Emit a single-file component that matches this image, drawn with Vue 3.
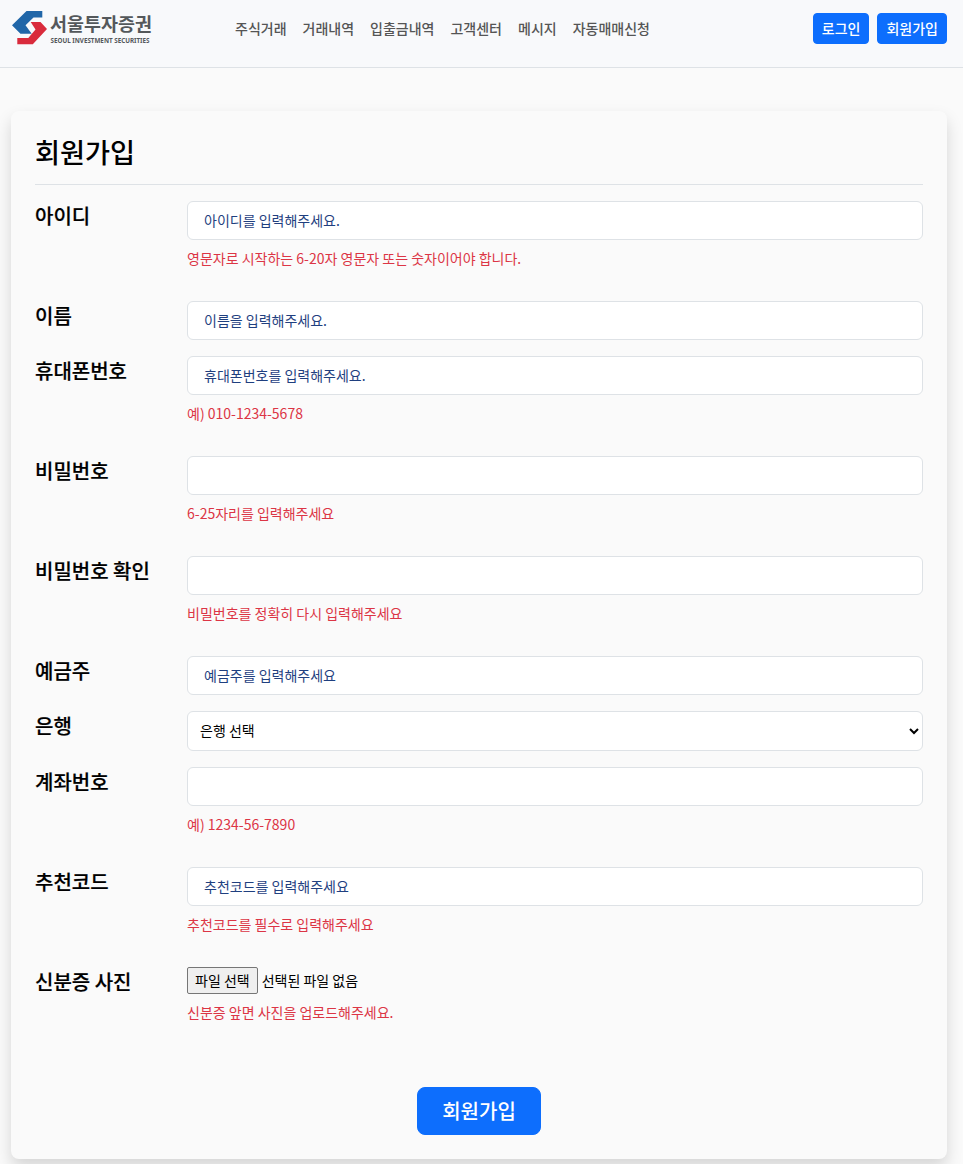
<script setup>
import { reactive } from 'vue';

const menus = ['주식거래', '거래내역', '입출금내역', '고객센터', '메시지', '자동매매신청'];

const fields = [
  { id: 'userid', label: '아이디', type: 'text', placeholder: '아이디를 입력해주세요.', help: '영문자로 시작하는 6-20자 영문자 또는 숫자이어야 합니다.' },
  { id: 'name', label: '이름', type: 'text', placeholder: '이름을 입력해주세요.' },
  { id: 'phone', label: '휴대폰번호', type: 'text', placeholder: '휴대폰번호를 입력해주세요.', help: '예) 010-1234-5678' },
  { id: 'password', label: '비밀번호', type: 'password', help: '6-25자리를 입력해주세요' },
  { id: 'passwordConfirm', label: '비밀번호 확인', type: 'password', help: '비밀번호를 정확히 다시 입력해주세요' },
  { id: 'holder', label: '예금주', type: 'text', placeholder: '예금주를 입력해주세요' },
  { id: 'bank', label: '은행', type: 'select' },
  { id: 'account', label: '계좌번호', type: 'text', help: '예) 1234-56-7890' },
  { id: 'code', label: '추천코드', type: 'text', placeholder: '추천코드를 입력해주세요', help: '추천코드를 필수로 입력해주세요' },
  { id: 'idcard', label: '신분증 사진', type: 'file', help: '신분증 앞면 사진을 업로드해주세요.' }
];

const form = reactive({ bank: '' });
</script>

<template>
  <header class="header">
    <a class="logo" href="#">
      <svg width="142" height="46" viewBox="0 0 142 46">
        <path fill="#2066a8" d="M14.500 3H30.300V9.500H21.500L13.500 17.300L19.700 25.700H8.500L0 17.300Z" />
        <path fill="#d92b3c" d="M18.700 14H28.500L35 21L20.800 36.300H5.300V30H16.300L23.500 21.500Z" />
        <text class="logo-ko" x="38" y="23" textLength="102" lengthAdjust="spacingAndGlyphs">서울투자증권</text>
        <text class="logo-en" x="38.500" y="35" textLength="99" lengthAdjust="spacingAndGlyphs">SEOUL INVESTMENT SECURITIES</text>
      </svg>
    </a>
    <nav class="menu">
      <a v-for="menu in menus" :key="menu" href="#">{{ menu }}</a>
    </nav>
    <div class="user">
      <button class="btn" type="button">로그인</button>
      <button class="btn" type="button">회원가입</button>
    </div>
  </header>

  <main class="card">
    <h3 class="title">회원가입</h3>
    <form @submit.prevent>
      <div v-for="field in fields" :key="field.id" class="row" :class="{ 'has-help': field.help }">
        <label class="label" :for="field.id">{{ field.label }}</label>
        <div class="field">
          <select v-if="field.type === 'select'" :id="field.id" v-model="form[field.id]" class="control select">
            <option value="">은행 선택</option>
          </select>
          <div v-else-if="field.type === 'file'" class="file">
            <button :id="field.id" class="file-btn" type="button">파일 선택</button>
            <span>선택된 파일 없음</span>
          </div>
          <input v-else :id="field.id" v-model="form[field.id]" class="control" :type="field.type" :placeholder="field.placeholder">
          <div v-if="field.help" class="help">{{ field.help }}</div>
        </div>
      </div>
      <div class="submit">
        <button class="btn btn-lg" type="submit">회원가입</button>
      </div>
    </form>
  </main>
</template>

<style>
  body {
    min-height: 100vh;
    background: #fafafa;
    font-family: "Noto Sans CJK KR", sans-serif;
    font-size: 14px;
    line-height: 20px;
    color: #000;
  }
  #app {
    display: flow-root;
    min-height: 100vh;
  }
</style>

<style scoped>
  * {
    box-sizing: border-box;
  }
  button, input, select {
    font-family: inherit;
    font-size: 14px;
  }
  .header {
    display: flex;
    align-items: flex-start;
    height: 68px;
    padding: 0 16px 0 12px;
    background: #f8f9fb;
    border-bottom: 1px solid #dee2e6;
  }
  .logo {
    width: 223px;
    padding-top: 8px;
  }
  .logo svg {
    display: block;
    overflow: visible;
  }
  .logo-ko {
    font-size: 18px;
    font-weight: 700;
    fill: #54585b;
  }
  .logo-en {
    font-family: "Noto Sans", sans-serif;
    font-size: 7px;
    font-weight: 700;
    fill: #54585b;
  }
  .menu {
    display: flex;
    gap: 16px;
    padding-top: 18px;
  }
  .menu a {
    color: #555;
    font-weight: 500;
    text-decoration: none;
  }
  .user {
    display: flex;
    gap: 8px;
    margin-left: auto;
    padding-top: 13px;
  }
  .btn {
    height: 31px;
    padding: 0 8px 1px;
    border: 1px solid #0d6efd;
    border-radius: 4px;
    background: #0d6efd;
    color: #fff;
    font-weight: 500;
    line-height: 20px;
  }
  .card {
    height: 1048px;
    margin: 43px 16px 0 11px;
    padding: 24px;
    border-radius: 8px;
    background: #fafafa;
    box-shadow: 0 8px 16px rgba(0, 0, 0, .15);
  }
  .title {
    height: 50px;
    margin: 0 0 16px;
    border-bottom: 1px solid #dee2e6;
    font-size: 27.200px;
    font-weight: 500;
    line-height: 33px;
  }
  .row {
    display: flex;
    margin-bottom: 16px;
  }
  .row.has-help {
    margin-bottom: 32px;
  }
  .label {
    width: 152px;
    font-size: 20px;
    font-weight: 500;
    line-height: 30px;
    -webkit-text-stroke: .2px #000;
  }
  .field {
    flex: 1;
  }
  .control {
    display: block;
    width: 100%;
    height: 39px;
    padding: 0 16px 2px;
    border: 1px solid #dee2e6;
    border-radius: 6px;
    background: #fff;
    color: #000;
  }
  .control::placeholder {
    color: #1f3f7f;
    opacity: 1;
  }
  .select {
    height: 40px;
    padding: 0 0 2px 8px;
  }
  .help {
    margin-top: 8px;
    padding-bottom: 1px;
    color: #dc3545;
  }
  .file {
    display: flex;
    align-items: center;
    gap: 4px;
    height: 27px;
  }
  .file span {
    padding-bottom: 1px;
  }
  .file-btn {
    height: 27px;
    padding: 0 7px 2px;
    border: 1px solid #767676;
    border-radius: 2px;
    background: #efefef;
    color: #000;
  }
  .submit {
    display: flex;
    justify-content: center;
    padding-top: 32px;
  }
  .btn-lg {
    width: 124px;
    height: 48px;
    border-radius: 8px;
    font-size: 20px;
  }
</style>
